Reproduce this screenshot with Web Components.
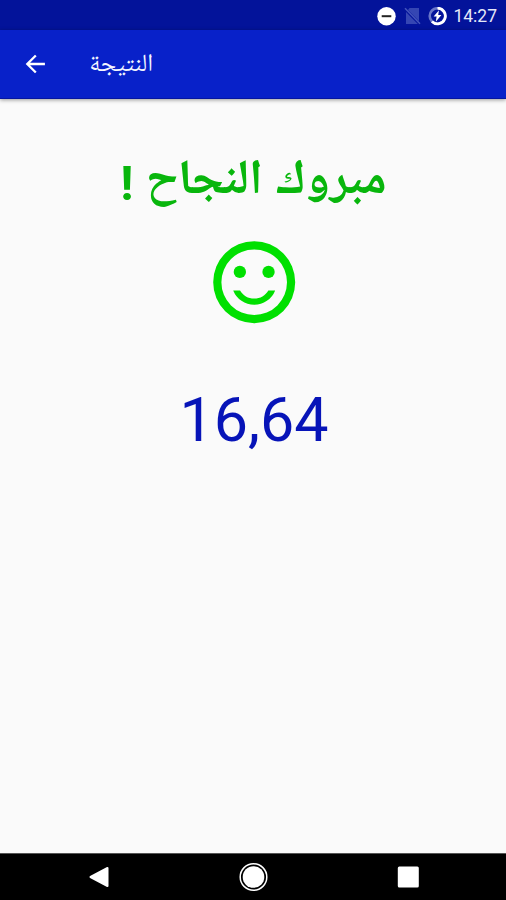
<!DOCTYPE html>
<html lang="ar">
<head>
<meta charset="utf-8">
<title>النتيجة</title>
<style>
html,body{margin:0;height:100%;overflow:hidden}
body{font-family:Roboto,"Noto Naskh Arabic UI","Noto Naskh Arabic","DejaVu Sans",sans-serif;background:#fafafa}
</style>
</head>
<body>
<result-screen></result-screen>
<script>
const define = (name, html) => customElements.define(name, class extends HTMLElement {
  constructor() {
    super();
    this.attachShadow({ mode: 'open' }).innerHTML = html;
  }
});

define('status-bar', `
<style>
:host{display:flex;justify-content:flex-end;align-items:center;height:30px;box-sizing:border-box;padding:2px 9px 0 0;background:#03139a;color:#e4e8f8}
svg{display:block;flex:none}
.dnd{margin-right:8px}.sim{margin-right:7px}.bat{margin-right:6px}
span{font-size:17.5px;line-height:28px}
</style>
<svg class="dnd" width="19" height="19" viewBox="0 0 19 19"><circle cx="9.5" cy="9.2" r="9.2" fill="#fff"/><path d="M4.7 9.2h9.6" stroke="#222" stroke-width="2"/></svg>
<svg class="sim" width="17" height="18" viewBox="0 0 17 18"><path d="M5.5 1H15v13.2L4 3zM2 5l11.8 12H2z" fill="#3546b3"/><path d="M1 1.2l15 15.6" stroke="#4556bc" stroke-width="1.5"/></svg>
<svg class="bat" width="19" height="19" viewBox="0 0 19 19"><circle cx="9.5" cy="9" r="7.8" fill="none" stroke="#6976c8" stroke-width="2.6"/><path d="M9.5 1.2a7.8 7.8 0 1 1-5.5 13.3" fill="none" stroke="#fff" stroke-width="2.8"/><path d="M11 3.3L5.6 9.500h3l-.8 5.3 5.6-6.7h-3.200z" fill="#fff"/></svg>
<span><slot></slot></span>`);

define('app-bar', `
<style>
:host{display:flex;align-items:center;height:69px;box-sizing:border-box;padding-left:21px;background:#0821c9;color:#f4f6ff;border-bottom:1px solid #0516a0;box-shadow:0 1px 4px #0006}
svg{display:block;margin-right:40px}
h1{margin:0;padding-top:3px;font-size:24.700px;font-weight:400;line-height:40px}
</style>
<svg width="28" height="28" viewBox="0 0 24 24"><path fill="#fff" d="M20.500 11H7.800l5.600-5.600L12 4l-8 8 8 8 1.400-1.400L7.800 13h12.700z"/></svg>
<h1 dir="rtl"><slot></slot></h1>`);

define('result-panel', `
<style>
:host{display:flex;flex-direction:column;align-items:center;flex:1;padding-top:55px}
h2{margin:0 0 0 1px;height:60px;line-height:60px;font-size:49px;font-weight:700;color:#08b60c;white-space:nowrap}
svg{display:block;margin:19px 0 0 2px}
output{margin-top:53px;font-size:61px;line-height:72px;color:#0714b8;margin-left:2px}
</style>
<h2 dir="rtl"><slot name="message"></slot></h2>
<svg width="98.400" height="98.400" viewBox="0 0 24 24" fill="#00e000"><path d="M12 2a10 10 0 1 0 0 20 10 10 0 0 0 0-20zm0 18a8 8 0 1 1 0-16 8 8 0 0 1 0 16z"/><circle cx="15.500" cy="9.500" r="1.500"/><circle cx="8.500" cy="9.500" r="1.500"/><path d="M12 16c-1.480 0-2.750-.81-3.450-2H6.880a5.500 5.500 0 0 0 10.240 0h-1.670c-.69 1.190-1.970 2-3.450 2z"/></svg>
<output><slot name="score"></slot></output>`);

define('nav-bar', `
<style>
:host{display:grid;grid-template-columns:repeat(3,155px);justify-content:center;justify-items:center;align-items:center;height:47px;box-sizing:border-box;background:#000;border-top:1px solid #555}
svg{display:block}
</style>
<svg width="30" height="30" viewBox="0 0 30 30"><path d="M7.500 15L24.500 6v18z" fill="#fff" stroke="#fff" stroke-width="2" stroke-linejoin="round"/></svg>
<svg width="30" height="30" viewBox="0 0 30 30"><circle cx="15.500" cy="15" r="13.300" fill="none" stroke="#fff" stroke-width="1.500"/><circle cx="15.500" cy="15" r="10.800" fill="#fff"/></svg>
<svg width="30" height="30" viewBox="0 0 30 30"><rect x="4.800" y="4.500" width="21" height="21" rx="1.500" fill="#fff"/></svg>`);

define('result-screen', `
<style>
:host{display:flex;flex-direction:column;width:506px;height:900px;background:#fafafa}
</style>
<status-bar>14:27</status-bar>
<app-bar>النتيجة</app-bar>
<result-panel><span slot="message">مبروك النجاح !</span><span slot="score">16,64</span></result-panel>
<nav-bar></nav-bar>`);
</script>
</body>
</html>
